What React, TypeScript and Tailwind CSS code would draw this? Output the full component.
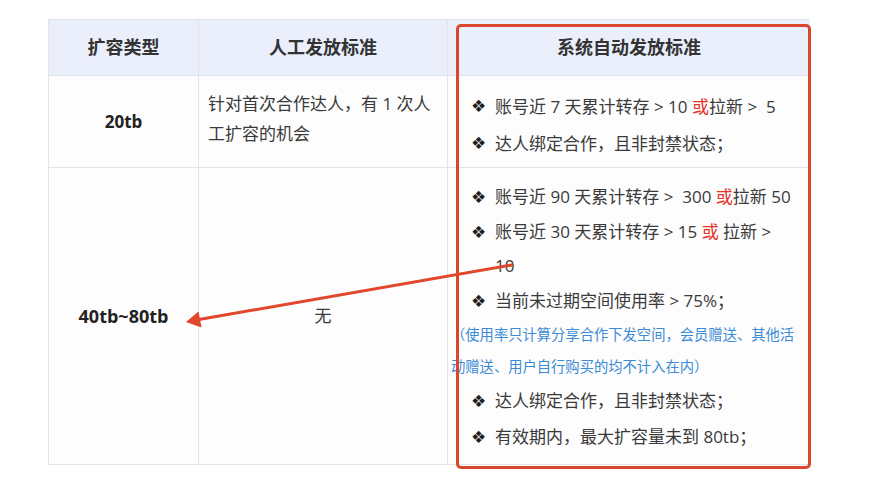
import React from "react";

const F = { fontFamily: '"Open Sans", "Noto Sans CJK SC", sans-serif' };

function Bullet({ children }: { children: React.ReactNode }) {
  return (
    <div className="flex items-start whitespace-nowrap">
      <span className="w-[24px] shrink-0 text-[17px] text-[#1e1e1e]" style={{ fontFamily: '"DejaVu Sans", sans-serif' }}>
        ❖
      </span>
      <span>{children}</span>
    </div>
  );
}

const Or = ({ space }: { space?: boolean }) => (
  <span className="text-[#e8332b]">或{space ? " " : ""}</span>
);

export default function App() {
  return (
    <div className="relative w-[874px] h-[479px] bg-white text-[#333]" style={F}>
      <div className="pt-[19px] pl-[48px]">
        <div className="grid w-[761px] grid-cols-[150px_249px_362px] grid-rows-[56px_92px_297px] border-l border-t border-[#e2e4ea] bg-[#fdfdfd]">
          {/* header */}
          <div className="flex items-center justify-center border-r border-b border-[#e2e4ea] bg-[#ebeffb] text-[18px] font-bold text-[#333]">
            扩容类型
          </div>
          <div className="flex items-center justify-center border-r border-b border-[#e2e4ea] bg-[#ebeffb] text-[18px] font-bold text-[#333]">
            人工发放标准
          </div>
          <div className="flex items-center justify-center border-b border-[#e2e4ea] bg-[#ebeffb] text-[18px] font-bold text-[#333]">
            系统自动发放标准
          </div>

          {/* row 1 */}
          <div className="flex items-center justify-center border-r border-b border-[#e2e4ea] text-[17px] font-bold text-[#222]">
            20tb
          </div>
          <div className="flex items-center border-r border-b border-[#e2e4ea] pl-[9px] pr-[4px] text-[17px] leading-[30px] text-[#3a3a3a]">
            <div className="-mt-[6px] whitespace-nowrap">
              针对首次合作达人，有 1 次人
              <br />
              工扩容的机会
            </div>
          </div>
          <div className="flex flex-col justify-center border-b border-[#e2e4ea] pl-[23px] text-[17px] leading-[37px] text-[#3a3a3a]">
            <div className="mt-[6px]">
              <Bullet>
                账号近 7 天累计转存 &gt; 10 <Or />拉新 &gt;&nbsp; 5
              </Bullet>
              <Bullet>达人绑定合作，且非封禁状态；</Bullet>
            </div>
          </div>

          {/* row 2 */}
          <div className="flex items-center justify-center border-r border-b border-[#e2e4ea] text-[18px] font-bold text-[#222]">
            40tb~80tb
          </div>
          <div className="flex items-center justify-center border-r border-b border-[#e2e4ea] text-[17px] text-[#3a3a3a]">
            无
          </div>
          <div className="flex flex-col justify-start border-b border-[#e2e4ea] pt-[12px] text-[17px] leading-[34.5px] text-[#3a3a3a]">
            <div className="pl-[23px]">
              <Bullet>
                账号近 90 天累计转存 &gt;&nbsp; 300 <Or />拉新 50
              </Bullet>
              <Bullet>
                账号近 30 天累计转存 &gt; 15 <Or space />拉新 &gt;
                <br />
                10
              </Bullet>
              <Bullet>当前未过期空间使用率 &gt; 75%；</Bullet>
            </div>
            <div className="mt-[1px] whitespace-nowrap pl-[3px] text-[14.3px] leading-[32px] text-[#3b8bd6]">
              （使用率只计算分享合作下发空间，会员赠送、其他活
              <br />
              动赠送、用户自行购买的均不计入在内）
            </div>
            <div className="pl-[23px] leading-[36px]">
              <Bullet>达人绑定合作，且非封禁状态；</Bullet>
              <Bullet>有效期内，最大扩容量未到 80tb；</Bullet>
            </div>
          </div>
        </div>
      </div>

      {/* red annotation box */}
      <div className="pointer-events-none absolute left-[456px] top-[24px] h-[445px] w-[355px] rounded-[5px] border-[3px] border-[#da472c]" />

      {/* arrow */}
      <svg className="pointer-events-none absolute left-0 top-0" width="874" height="479" viewBox="0 0 874 479">
        <line x1="512" y1="265" x2="199" y2="319.5" stroke="#e2462b" strokeWidth="3" strokeLinecap="round" />
        <polygon points="186,322 201.5,327.5 198.5,311.5" fill="#e2462b" />
      </svg>
    </div>
  );
}
